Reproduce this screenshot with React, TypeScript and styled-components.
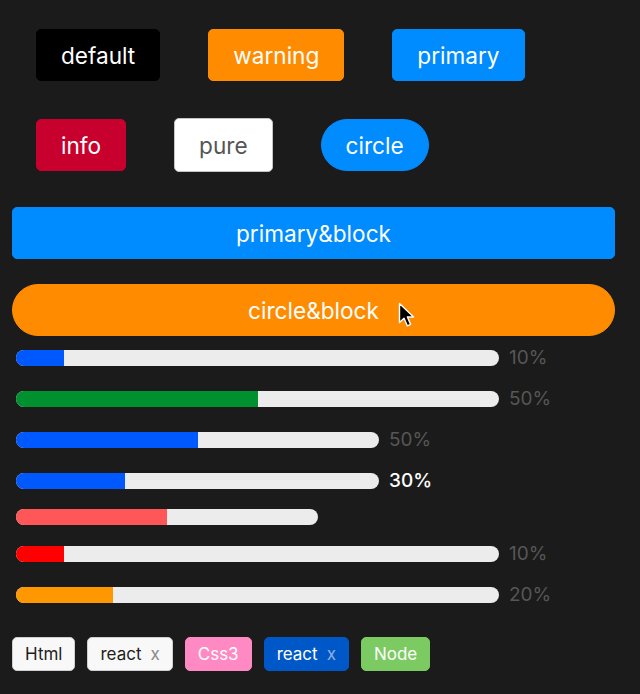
import React from "react";
import styled, { createGlobalStyle, css } from "styled-components";

const GlobalStyle = createGlobalStyle`
    html, body {
        margin: 0;
        padding: 0;
        background: #1b1b1b;
    }
    body {
        font-family: Inter, "Noto Sans", "Liberation Sans", sans-serif;
        -webkit-font-smoothing: antialiased;
    }
`;

type Variant = "default" | "warning" | "primary" | "info" | "pure";

const buttonColors: Record<Variant, { bg: string; fg: string; border: string }> = {
    default: { bg: "#000000", fg: "#ffffff", border: "#000000" },
    warning: { bg: "#ff8c00", fg: "#ffffff", border: "#ff8c00" },
    primary: { bg: "#008cff", fg: "#ffffff", border: "#008cff" },
    info: { bg: "#c8002d", fg: "#ffffff", border: "#c8002d" },
    pure: { bg: "#ffffff", fg: "#555555", border: "#c4c4c4" }
};

const Page = styled.div`
    width: 603px;
    padding: 29px 0 0 12px;
    box-sizing: content-box;
`;

const ButtonRow = styled.div<{ $space: number }>`
    display: flex;
    align-items: center;
    gap: 48px;
    padding-left: 24px;
    margin-bottom: ${p => p.$space}px;
`;

const Button = styled.button<{ $variant: Variant; $circle?: boolean; $block?: boolean }>`
    position: relative;
    display: inline-flex;
    align-items: center;
    justify-content: center;
    box-sizing: border-box;
    height: ${p => (p.$variant === "pure" ? 54 : 52)}px;
    padding: 0 24px;
    border: 1px solid ${p => buttonColors[p.$variant].border};
    border-radius: ${p => (p.$circle ? "26px" : "5px")};
    background: ${p => buttonColors[p.$variant].bg};
    color: ${p => buttonColors[p.$variant].fg};
    font-family: Inter, "Noto Sans", sans-serif;
    font-size: 22.6px;
    font-weight: 400;
    cursor: pointer;
    ${p =>
        p.$block &&
        css`
            display: flex;
            width: 100%;
        `}
`;

const BlockStack = styled.div`
    display: flex;
    flex-direction: column;
    gap: 25px;
    margin-bottom: 9px;
`;

const Cursor = styled.svg`
    position: absolute;
    left: 385px;
    top: 17px;
    width: 18px;
    height: 26px;
`;

const ProgressList = styled.div`
    display: flex;
    flex-direction: column;
    gap: 16px;
    padding-left: 4px;
`;

const ProgressRow = styled.div`
    display: flex;
    align-items: center;
    min-height: 16px;
`;

const Track = styled.div<{ $width: number }>`
    width: ${p => p.$width}px;
    height: 16px;
    border-radius: 8px;
    background: #ececec;
    overflow: hidden;
    flex-shrink: 0;
`;

const Fill = styled.div<{ $color: string }>`
    height: 100%;
    background: ${p => p.$color};
`;

const Percent = styled.span<{ $active?: boolean }>`
    margin-left: 10px;
    font-size: 19px;
    line-height: 25px;
    color: ${p => (p.$active ? "#ffffff" : "#565656")};
    font-weight: ${p => (p.$active ? 500 : 400)};
`;

const TagRow = styled.div`
    display: flex;
    gap: 12px;
    margin-top: 30px;
`;

type TagKind = "plain" | "pink" | "blue" | "green";

const tagColors: Record<TagKind, { bg: string; fg: string; border: string; close: string }> = {
    plain: { bg: "#f8f8f8", fg: "#1e1e1e", border: "#cfcfcf", close: "#8a8a8a" },
    pink: { bg: "#ff8ac3", fg: "#ffffff", border: "#ff8ac3", close: "#ffffff" },
    blue: { bg: "#0058c8", fg: "#ffffff", border: "#0058c8", close: "#8fb0e0" },
    green: { bg: "#7ccb62", fg: "#ffffff", border: "#7ccb62", close: "#ffffff" }
};

const Tag = styled.span<{ $kind: TagKind }>`
    display: inline-flex;
    align-items: center;
    box-sizing: border-box;
    height: 34px;
    padding: 0 12px;
    border-radius: 5px;
    border: 1px solid ${p => tagColors[p.$kind].border};
    background: ${p => tagColors[p.$kind].bg};
    color: ${p => tagColors[p.$kind].fg};
    font-size: 17px;
`;

const TagClose = styled.span<{ $kind: TagKind }>`
    margin-left: 9px;
    color: ${p => tagColors[p.$kind].close};
    font-size: 17px;
`;

const progressData = [
    { width: 483, value: 10, color: "#0058ff", label: "10%" },
    { width: 483, value: 50, color: "#00902f", label: "50%" },
    { width: 363, value: 50, color: "#0058ff", label: "50%" },
    { width: 363, value: 30, color: "#0058ff", label: "30%", active: true },
    { width: 302, value: 50, color: "#ff5757" },
    { width: 483, value: 10, color: "#ff0000", label: "10%" },
    { width: 483, value: 20, color: "#ff9800", label: "20%" }
];

const App = () => {
    return (
        <>
            <GlobalStyle />
            <Page>
                <ButtonRow $space={37}>
                    <Button $variant="default">default</Button>
                    <Button $variant="warning">warning</Button>
                    <Button $variant="primary">primary</Button>
                </ButtonRow>
                <ButtonRow $space={35}>
                    <Button $variant="info">info</Button>
                    <Button $variant="pure">pure</Button>
                    <Button $variant="primary" $circle>
                        circle
                    </Button>
                </ButtonRow>
                <BlockStack>
                    <Button $variant="primary" $block>
                        primary&amp;block
                    </Button>
                    <Button $variant="warning" $block $circle>
                        circle&amp;block
                        <Cursor viewBox="0 0 18 26">
                            <path
                                d="M1.5 1.5 L1.5 20.5 L6 16.2 L9.3 23.8 L12.6 22.4 L9.4 15 L15.6 15 Z"
                                fill="#000"
                                stroke="#fff"
                                strokeWidth="1.4"
                                strokeLinejoin="round"
                            />
                        </Cursor>
                    </Button>
                </BlockStack>
                <ProgressList>
                    {progressData.map((item, i) => (
                        <ProgressRow key={i}>
                            <Track $width={item.width}>
                                <Fill
                                    $color={item.color}
                                    style={{ width: `${item.value}%` }}
                                />
                            </Track>
                            {item.label && (
                                <Percent $active={item.active}>{item.label}</Percent>
                            )}
                        </ProgressRow>
                    ))}
                </ProgressList>
                <TagRow>
                    <Tag $kind="plain">Html</Tag>
                    <Tag $kind="plain">
                        react<TagClose $kind="plain">x</TagClose>
                    </Tag>
                    <Tag $kind="pink">Css3</Tag>
                    <Tag $kind="blue">
                        react<TagClose $kind="blue">x</TagClose>
                    </Tag>
                    <Tag $kind="green">Node</Tag>
                </TagRow>
            </Page>
        </>
    );
};

export default App;
